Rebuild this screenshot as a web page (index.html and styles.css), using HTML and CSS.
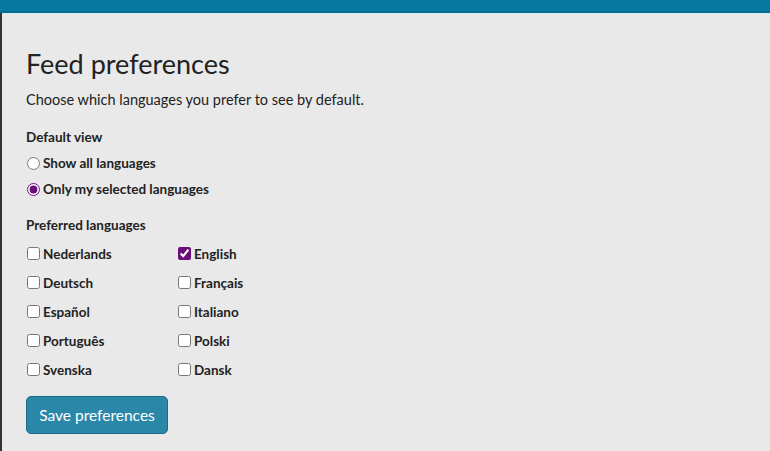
FILE: index.html
```html
<!DOCTYPE html>
<html lang="en">
<head>
<meta charset="utf-8">
<title>Feed preferences</title>
<link rel="stylesheet" href="styles.css">
</head>
<body>
<div class="topbar"></div>
<main class="page">
  <h1 class="title">Feed preferences</h1>
  <p class="intro">Choose which languages you prefer to see by default.</p>
  <form class="prefs">
    <fieldset class="group">
      <legend class="group-label">Default view</legend>
      <label class="opt"><input type="radio" name="view" value="all"> Show all languages</label>
      <label class="opt"><input type="radio" name="view" value="mine" checked> Only my selected languages</label>
    </fieldset>
    <fieldset class="group group-langs">
      <legend class="group-label">Preferred languages</legend>
      <div class="langs">
        <label class="lang"><input type="checkbox"> Nederlands</label>
        <label class="lang"><input type="checkbox" checked> English</label>
        <label class="lang"><input type="checkbox"> Deutsch</label>
        <label class="lang"><input type="checkbox"> Français</label>
        <label class="lang"><input type="checkbox"> Español</label>
        <label class="lang"><input type="checkbox"> Italiano</label>
        <label class="lang"><input type="checkbox"> Português</label>
        <label class="lang"><input type="checkbox"> Polski</label>
        <label class="lang"><input type="checkbox"> Svenska</label>
        <label class="lang"><input type="checkbox"> Dansk</label>
      </div>
    </fieldset>
    <button type="button" class="save">Save preferences</button>
  </form>
</main>
</body>
</html>
```

FILE: styles.css
```css
html, body {
  margin: 0;
  padding: 0;
  height: 100%;
}
body {
  background: #e9e9e9;
  font-family: Lato, "Noto Sans", sans-serif;
  color: #222;
  overflow: hidden;
}
.topbar {
  height: 11px;
  background: #07789f;
  border-bottom: 2px solid #0b6a90;
  box-shadow: 0 1px 0 #cdeef8;
}
.page {
  border-left: 2px solid #333;
  height: calc(100% - 13px);
  box-sizing: border-box;
  padding: 34px 24px 0 24px;
}
.title {
  margin: 0;
  font-size: 27px;
  font-weight: 400;
  line-height: 34px;
  color: #222;
}
.intro {
  margin: 9px 0 0 0;
  font-size: 14.5px;
  line-height: 20px;
  color: #222;
}
.prefs {
  margin-top: 17px;
}
.group {
  border: 0;
  margin: 0 0 13px 0;
  padding: 0;
  min-width: 0;
}
.group-langs {
  margin-bottom: 12px;
}
.group-label {
  padding: 0;
  font-size: 13.5px;
  font-weight: 700;
  line-height: 20px;
  margin-bottom: 3px;
}
.opt {
  display: flex;
  align-items: center;
  gap: 3px;
  font-size: 13.5px;
  font-weight: 700;
  line-height: 26px;
  height: 26px;
}
.opt input, .lang input {
  margin: 0 0 0 1px;
  width: 13px;
  height: 13px;
  accent-color: #6a0f7a;
}
.langs {
  display: grid;
  grid-template-columns: 151px 151px;
  grid-auto-rows: 29px;
  margin-top: 1px;
}
.lang {
  display: flex;
  align-items: center;
  gap: 3px;
  font-size: 13.5px;
  font-weight: 700;
}
.save {
  display: block;
  width: 142px;
  height: 38px;
  padding: 0;
  background: #2a87a8;
  color: #fff;
  border: 1px solid #1c6a88;
  border-radius: 5px;
  font-family: inherit;
  font-size: 15.5px;
  cursor: pointer;
}
```
